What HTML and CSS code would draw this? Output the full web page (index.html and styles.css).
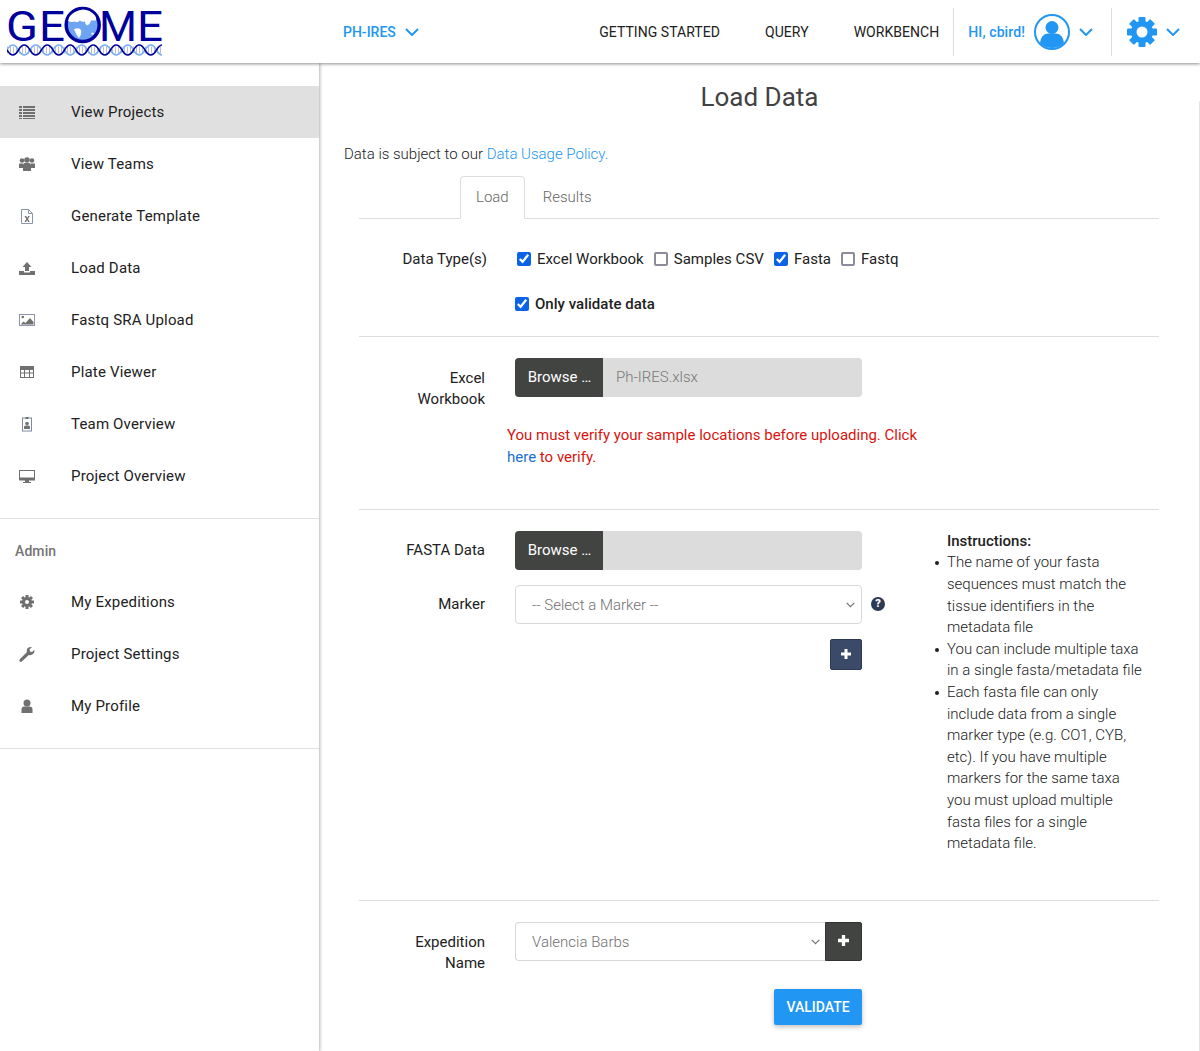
FILE: index.html
```html
<!DOCTYPE html>
<html lang="en">

<head>
    <meta charset="UTF-8">
    <meta name="viewport" content="width=device-width, initial-scale=1.0">
    <title>Load Data</title>
    <link rel="stylesheet" href="styles.css">
</head>

<body>
    <header class="topbar">
        <a class="logo" href="#">
            <svg width="155" height="58" viewBox="0 -6 155 58">
                <text class="logo-letter" x="-1" y="35" textLength="32" lengthAdjust="spacingAndGlyphs">G</text>
                <text class="logo-letter" x="32" y="35" textLength="26" lengthAdjust="spacingAndGlyphs">E</text>
                <text class="logo-letter" x="92" y="35" textLength="38" lengthAdjust="spacingAndGlyphs">M</text>
                <text class="logo-letter" x="130" y="35" textLength="26" lengthAdjust="spacingAndGlyphs">E</text>
                <circle cx="75.700" cy="19" r="16.500" fill="#6ea5f2" stroke="#00009c" stroke-width="3.500" />
                <path d="M61 15 q1 -6 7 -9 q3 -2 8 -2.500 q7 0 12 6 q2 3 1 5 l-5 0 q-1 4 -4 5 q-2 -1 -2 -4 q-3 1 -5 -1 q-3 3 -5 1 q-4 1 -7 -0.500z" fill="#fff" />
                <path d="M67 23 q5 -2 7 1 q1 4 -2 8 q-3 -3 -5 -9z" fill="#fff" />
                <path d="M84 27 q3 -1 3 1 q-2 2 -3 -1z" fill="#fff" />
                <path d="M0 44 h155" fill="none" stroke="#b9bfd0" stroke-width="7" stroke-dasharray="1 2" />
                <path d="M0 44 q5.750 -10 11.500 0 t11.500 0 t11.500 0 t11.500 0 t11.500 0 t11.500 0 t11.500 0 t11.500 0 t11.500 0 t11.500 0 t11.500 0 t11.500 0 t11.500 0 t11.500 0" fill="none" stroke="#7aaef0" stroke-width="1.600" />
                <path d="M0 44 q5.750 10 11.500 0 t11.500 0 t11.500 0 t11.500 0 t11.500 0 t11.500 0 t11.500 0 t11.500 0 t11.500 0 t11.500 0 t11.500 0 t11.500 0 t11.500 0 t11.500 0" fill="none" stroke="#00009c" stroke-width="1.600" />
            </svg>
        </a>
        <a class="project-link" href="#">PH-IRES
            <svg class="chevron" width="14" height="8" viewBox="0 0 14 8"><path d="M1 1l6 6 6-6" /></svg>
        </a>
        <nav class="main-nav">
            <a href="#">Getting Started</a>
            <a href="#">Query</a>
            <a href="#">Workbench</a>
        </nav>
        <div class="user-menu">
            <span>HI, cbird!</span>
            <svg class="avatar" width="36" height="36" viewBox="0 0 36 36">
                <circle cx="18" cy="18" r="17" fill="#fff" stroke="#2196f3" stroke-width="2" />
                <circle cx="18" cy="13.500" r="6.500" fill="#2196f3" />
                <path d="M6 29 q1 -9 8 -9.500 h8 q7 .5 8 9.500 q-5 5 -12 5 q-7 0 -12 -5z" fill="#2196f3" />
            </svg>
            <svg class="chevron" width="14" height="8" viewBox="0 0 14 8"><path d="M1 1l6 6 6-6" /></svg>
        </div>
        <div class="settings-menu">
            <svg width="32" height="32" viewBox="0 0 32 32" fill="#2196f3">
                <g>
                    <rect x="12.500" y="1" width="7" height="30" rx="1" />
                    <rect x="12.500" y="1" width="7" height="30" rx="1" transform="rotate(45 16 16)" />
                    <rect x="12.500" y="1" width="7" height="30" rx="1" transform="rotate(90 16 16)" />
                    <rect x="12.500" y="1" width="7" height="30" rx="1" transform="rotate(135 16 16)" />
                </g>
                <circle cx="16" cy="16" r="11" />
                <circle cx="16" cy="16" r="5.500" fill="#fff" />
            </svg>
            <svg class="chevron" width="14" height="8" viewBox="0 0 14 8"><path d="M1 1l6 6 6-6" /></svg>
        </div>
    </header>

    <div class="layout">
        <aside class="sidebar">
            <ul class="side-list">
                <li class="side-item active">
                    <svg viewBox="0 0 16 16"><path d="M0 2h3v2H0zM4 2h12v2H4zM0 5h3v2H0zM4 5h12v2H4zM0 8h3v2H0zM4 8h12v2H4zM0 11h3v2H0zM4 11h12v2H4zM0 14h3v1H0zM4 14h12v1H4z" /></svg>
                    View Projects
                </li>
                <li class="side-item">
                    <svg viewBox="0 0 16 16"><circle cx="3" cy="4.500" r="2.300" /><circle cx="13" cy="4.500" r="2.300" /><circle cx="8" cy="4" r="2.800" /><path d="M0 7.500h4v4.500H0zM12 7.500h4v4.500h-4z" /><path d="M4 9q0-2 2-2h4q2 0 2 2v6H4z" /></svg>
                    View Teams
                </li>
                <li class="side-item">
                    <svg viewBox="0 0 16 16"><path d="M2.500 1.500h7l4 4v10h-11z" fill="#fff" stroke="#8a96a6" /><path d="M9.500 1.500v4h4" fill="none" stroke="#8a96a6" /><path d="M5.500 8h1.700l1 1.800 1-1.800h1.500L9 11l1.800 3H9.100l-1-1.900-1 1.900H5.400l1.900-3z" /></svg>
                    Generate Template
                </li>
                <li class="side-item">
                    <svg viewBox="0 0 16 16"><path d="M8 2l4.500 5H10v4H6V7H3.500z" /><path d="M0 11h5v1.500h6V11h5v4H0z" /></svg>
                    Load Data
                </li>
                <li class="side-item">
                    <svg viewBox="0 0 16 16"><rect x=".5" y="2.500" width="15" height="11" fill="#fff" stroke="#8a96a6" /><circle cx="3.800" cy="5" r="1.300" /><path d="M1.500 12.500l3-3 2 1.500 4.500-5 3.500 4v2.500z" /></svg>
                    Fastq SRA Upload
                </li>
                <li class="side-item">
                    <svg viewBox="0 0 16 16"><path fill-rule="evenodd" d="M1 2h14v12H1zM2 6v2.500h3V6zM6 6v2.500h4V6zM11 6v2.500h3V6zM2 9.500V13h3V9.500zM6 9.500V13h4V9.500zM11 9.500V13h3V9.500z" /></svg>
                    Plate Viewer
                </li>
                <li class="side-item">
                    <svg viewBox="0 0 16 16"><rect x="3.500" y="2" width="9" height="13" fill="#fff" stroke="#7a8ca0" /><rect x="6.500" y="1" width="3" height="2" /><circle cx="8" cy="7.500" r="1.800" /><path d="M5 13v-2q0-1.500 1.500-1.500h3q1.500 0 1.500 1.500v2z" /></svg>
                    Team Overview
                </li>
                <li class="side-item">
                    <svg viewBox="0 0 16 16"><path fill-rule="evenodd" d="M0 2h16v10.500H0zM1 3v6.500h14V3z" /><path d="M6 12h4v2h2v1H4v-1h2z" /></svg>
                    Project Overview
                </li>
            </ul>
            <hr class="side-divider">
            <h4 class="side-heading">Admin</h4>
            <ul class="side-list">
                <li class="side-item">
                    <svg viewBox="0 0 16 16"><g><rect x="6.500" y="1" width="3" height="14" /><rect x="6.500" y="1" width="3" height="14" transform="rotate(45 8 8)" /><rect x="6.500" y="1" width="3" height="14" transform="rotate(90 8 8)" /><rect x="6.500" y="1" width="3" height="14" transform="rotate(135 8 8)" /></g><circle cx="8" cy="8" r="5" /><circle cx="8" cy="8" r="2" fill="#fff" /></svg>
                    My Expeditions
                </li>
                <li class="side-item">
                    <svg viewBox="0 0 16 16"><path d="M1 13l7-7q-1-3 1.500-4.500 1.500-.8 3.500-.5L10.500 3.500l.5 2 2 .5 2.300-2.300q.5 2.500-1 4-2 2-4.500 1.300l-7 6.500q-1 .8-2 0-.8-.8-.3-1.500z" /></svg>
                    Project Settings
                </li>
                <li class="side-item">
                    <svg viewBox="0 0 16 16"><circle cx="8" cy="5" r="3.500" /><path d="M2.500 15v-3.500q0-3 3-3h5q3 0 3 3V15z" /></svg>
                    My Profile
                </li>
            </ul>
            <hr class="side-divider">
        </aside>

        <main class="content">
            <h1 class="page-title">Load Data</h1>
            <p class="policy">Data is subject to our <a href="#">Data Usage Policy.</a></p>

            <div class="form-area">
                <ul class="tabs">
                    <li class="tab active">Load</li>
                    <li class="tab">Results</li>
                </ul>

                <div class="types-row">
                    <span class="types-label">Data Type(s)</span>
                    <label class="check"><input type="checkbox" checked> Excel Workbook</label>
                    <label class="check"><input type="checkbox"> Samples CSV</label>
                    <label class="check"><input type="checkbox" checked> Fasta</label>
                    <label class="check"><input type="checkbox"> Fastq</label>
                </div>
                <label class="check validate-only"><input type="checkbox" checked> Only validate data</label>

                <hr class="section-line">

                <div class="form-row">
                    <label class="row-label">Excel Workbook</label>
                    <div class="file-input">
                        <span class="browse">Browse …</span>
                        <span class="file-name">Ph-IRES.xlsx</span>
                    </div>
                </div>
                <p class="warning">You must verify your sample locations before uploading. Click <a href="#">here</a> to verify.</p>

                <hr class="section-line warning-line">

                <div class="fasta-section">
                    <div class="fasta-fields">
                        <div class="form-row">
                            <label class="row-label">FASTA Data</label>
                            <div class="file-input">
                                <span class="browse">Browse …</span>
                                <span class="file-name"></span>
                            </div>
                        </div>
                        <div class="form-row marker-row">
                            <label class="row-label">Marker</label>
                            <select class="select-box">
                                <option>-- Select a Marker --</option>
                            </select>
                            <span class="help-icon">?</span>
                        </div>
                        <div class="add-row">
                            <button class="add-marker">
                                <svg width="10" height="10" viewBox="0 0 10 10"><path d="M3.500 0h3v3.500H10v3H6.500V10h-3V6.500H0v-3h3.500z" fill="#fff" /></svg>
                            </button>
                        </div>
                    </div>
                    <div class="instructions">
                        <strong>Instructions:</strong>
                        <ul>
                            <li>The name of your fasta sequences must match the tissue identifiers in the metadata file</li>
                            <li>You can include multiple taxa in a single fasta/metadata file</li>
                            <li>Each fasta file can only include data from a single marker type (e.g. CO1, CYB, etc). If you have multiple markers for the same taxa you must upload multiple fasta files for a single metadata file.</li>
                        </ul>
                    </div>
                </div>

                <hr class="section-line">

                <div class="form-row">
                    <label class="row-label">Expedition Name</label>
                    <div class="select-group">
                        <select class="select-box">
                            <option>Valencia Barbs</option>
                        </select>
                        <button class="add-expedition">
                            <svg width="11" height="11" viewBox="0 0 10 10"><path d="M3.500 0h3v3.500H10v3H6.500V10h-3V6.500H0v-3h3.500z" fill="#fff" /></svg>
                        </button>
                    </div>
                </div>
                <div class="submit-row">
                    <button class="validate-btn">Validate</button>
                </div>
            </div>
        </main>
    </div>
</body>

</html>
```

FILE: styles.css
```css
* {
    box-sizing: border-box;
}

body {
    margin: 0;
    font-family: Roboto, "Liberation Sans", sans-serif;
    font-size: 15px;
    color: #212121;
    background-color: white;
}

a {
    text-decoration: none;
}

/* top bar */
.topbar {
    position: relative;
    z-index: 2;
    display: flex;
    align-items: center;
    height: 63px;
    padding-left: 7px;
    background-color: white;
    box-shadow: 0 1px 3px rgba(0, 0, 0, 0.45);
}

.logo {
    display: block;
    align-self: flex-start;
    width: 155px;
    height: 58px;
}

.logo-letter {
    font-family: Roboto, sans-serif;
    font-weight: 400;
    font-size: 43px;
    fill: #00009c;
}

.project-link {
    display: flex;
    align-items: center;
    gap: 9px;
    margin-left: 181px;
    font-size: 14px;
    font-weight: 500;
    color: #2196f3;
}

.chevron {
    fill: none;
    stroke: #2196f3;
    stroke-width: 2;
}

.main-nav {
    display: flex;
    gap: 45px;
    margin-left: auto;
    margin-right: 14px;
}

.main-nav a {
    font-size: 14px;
    letter-spacing: 0.05px;
    color: #212121;
    text-transform: uppercase;
}

.user-menu {
    display: flex;
    align-items: center;
    height: 48px;
    padding: 0 18px 0 14px;
    border-left: 1px solid #ddd;
    border-right: 1px solid #ddd;
    font-size: 14px;
    font-weight: 500;
    letter-spacing: 0.1px;
    color: #2196f3;
}

.user-menu .avatar {
    margin: 0 9px;
}

.settings-menu {
    display: flex;
    align-items: center;
    gap: 8px;
    padding: 0 20px 0 14px;
}

/* side menu */
.layout {
    display: flex;
    min-height: 988px;
}

.sidebar {
    position: relative;
    z-index: 1;
    flex: 0 0 319px;
    padding-top: 23px;
    box-shadow: 1px 0 3px rgba(0, 0, 0, 0.3);
}

.side-list {
    margin: 0;
    padding: 0;
    list-style: none;
}

.side-item {
    display: flex;
    align-items: center;
    gap: 36px;
    height: 52px;
    padding-left: 19px;
    letter-spacing: 0.18px;
    color: #212121;
}

.side-item svg {
    flex: none;
    width: 16px;
    height: 16px;
    fill: #707070;
}

.side-item.active {
    background-color: #e0e0e0;
}

.side-divider {
    margin: 16px 0 0;
    border: 0;
    border-top: 1px solid #e0e0e0;
}

.side-heading {
    margin: 0;
    padding: 22px 15px 15px;
    font-size: 14px;
    line-height: 20px;
    font-weight: 500;
    letter-spacing: 0.1px;
    color: #757575;
}

/* main part */
.content {
    position: relative;
    flex: 1;
    min-width: 0;
}

.content::after {
    content: "";
    position: absolute;
    top: 38px;
    right: 0;
    bottom: 0;
    width: 1px;
    background-color: #e4e4e4;
}

.page-title {
    margin: 17px 0 0;
    font-size: 26px;
    line-height: 34px;
    font-weight: 400;
    text-align: center;
    color: #424242;
}

.policy {
    margin: 30px 0 0 25px;
    line-height: 20px;
    font-weight: 300;
}

.policy a,
.warning a {
    color: #2196f3;
}

.form-area {
    width: 800px;
    margin: 12px 0 0 40px;
}

.tabs {
    display: flex;
    gap: 2px;
    height: 43px;
    margin: 0;
    padding: 0 0 0 101px;
    list-style: none;
    border-bottom: 1px solid #ddd;
}

.tab {
    height: 43px;
    padding: 0 15px;
    line-height: 40px;
    font-weight: 300;
    color: #666;
    border: 1px solid transparent;
    border-radius: 4px 4px 0 0;
}

.tab.active {
    border-color: #ddd;
    border-bottom-color: white;
}

.types-row {
    display: flex;
    gap: 10px;
    align-items: center;
    height: 22px;
    margin-top: 29px;
}

.types-label {
    width: 128px;
    margin-right: 20px;
    text-align: right;
}

.check {
    display: inline-flex;
    align-items: center;
    gap: 6px;
    line-height: 22px;
    letter-spacing: 0.02px;
}

.check input {
    width: 14px;
    height: 14px;
    margin: 0;
    accent-color: #0b63e5;
}

.check input:not(:checked) {
    appearance: none;
    background-color: white;
    border: 2px solid #8b8b99;
    border-radius: 2px;
}

.validate-only {
    display: flex;
    height: 22px;
    margin: 23px 0 0 156px;
    font-weight: 500;
}

.section-line {
    margin: 21px 0;
    border: 0;
    border-top: 1px solid #ddd;
}

.warning-line {
    margin-top: 41px;
}

.form-row {
    display: flex;
    align-items: flex-start;
}

.row-label {
    width: 126px;
    margin-right: 30px;
    padding-top: 10px;
    padding-left: 40px;
    line-height: 21px;
    text-align: right;
}

.fasta-fields .row-label {
    padding-top: 9px;
}

.file-input {
    display: flex;
    width: 347px;
    height: 39px;
    border-radius: 4px;
    overflow: hidden;
    background-color: #dcdcdc;
}

.browse {
    flex: 0 0 88px;
    padding-left: 1px;
    line-height: 39px;
    text-align: center;
    color: white;
    background-color: #424442;
}

.file-name {
    padding-left: 13px;
    line-height: 38px;
    font-weight: 300;
    color: #777;
}

.warning {
    width: 420px;
    margin: 15px 0 0 148px;
    line-height: 21.6px;
    color: #d9140e;
}

.warning a {
    color: #1a6fd0;
}

.fasta-section {
    display: flex;
    align-items: flex-start;
}

.fasta-fields {
    flex: 0 0 503px;
}

.marker-row {
    position: relative;
    margin-top: 15px;
}

.select-box {
    appearance: none;
    width: 347px;
    height: 39px;
    padding: 0 16px;
    font-family: Roboto, sans-serif;
    font-size: 15px;
    font-weight: 300;
    color: #707070;
    background-color: white;
    background-image: url("data:image/svg+xml,%3Csvg xmlns='http://www.w3.org/2000/svg' width='9' height='6'%3E%3Cpath d='M.7.9l3.800 3.800L8.300.9' fill='none' stroke='%23777' stroke-width='1.300'/%3E%3C/svg%3E");
    background-repeat: no-repeat;
    background-position: right 6px center;
    border: 1px solid #d8d8d8;
    border-radius: 4px;
}

.help-icon {
    position: absolute;
    left: 512px;
    top: 12px;
    width: 14px;
    height: 14px;
    font-size: 11px;
    font-weight: 900;
    line-height: 14px;
    text-align: center;
    color: white;
    background-color: #2b3a55;
    border-radius: 50%;
}

.add-row {
    display: flex;
    justify-content: flex-end;
    margin-top: 15px;
}

.add-marker {
    width: 32px;
    height: 31px;
    padding: 0;
    background-color: #3a4a68;
    border: 1px solid #2b3a55;
    border-radius: 2px;
}

.instructions {
    width: 198px;
    margin: -0.4px 0 0 85px;
    line-height: 21.6px;
    font-weight: 300;
}

.instructions strong {
    font-weight: 500;
}

.instructions ul {
    margin: 0 0 24.4px;
    padding: 0;
    list-style: none;
}

.instructions li {
    position: relative;
}

.instructions li::before {
    content: "";
    position: absolute;
    left: -12px;
    top: 9px;
    width: 4px;
    height: 4px;
    background-color: #212121;
    border-radius: 50%;
}

.select-group {
    display: flex;
    width: 347px;
}

.select-group .select-box {
    flex: 1;
    width: auto;
    min-width: 0;
    background-position: right 5px center;
    border-right: 0;
    border-radius: 4px 0 0 4px;
}

.add-expedition {
    flex: 0 0 37px;
    height: 39px;
    padding: 0;
    background-color: #424442;
    border: 1px solid #333;
    border-radius: 0 2px 2px 0;
}

.submit-row {
    display: flex;
    justify-content: flex-end;
    width: 503px;
    margin-top: 15px;
    padding-bottom: 26px;
}

.validate-btn {
    width: 88px;
    height: 36px;
    padding: 0;
    font-family: Roboto, sans-serif;
    font-size: 14px;
    font-weight: 500;
    text-transform: uppercase;
    color: white;
    background-color: #2196f3;
    border: 0;
    border-radius: 2px;
    box-shadow: 0 2px 5px rgba(0, 0, 0, 0.26);
}
```
